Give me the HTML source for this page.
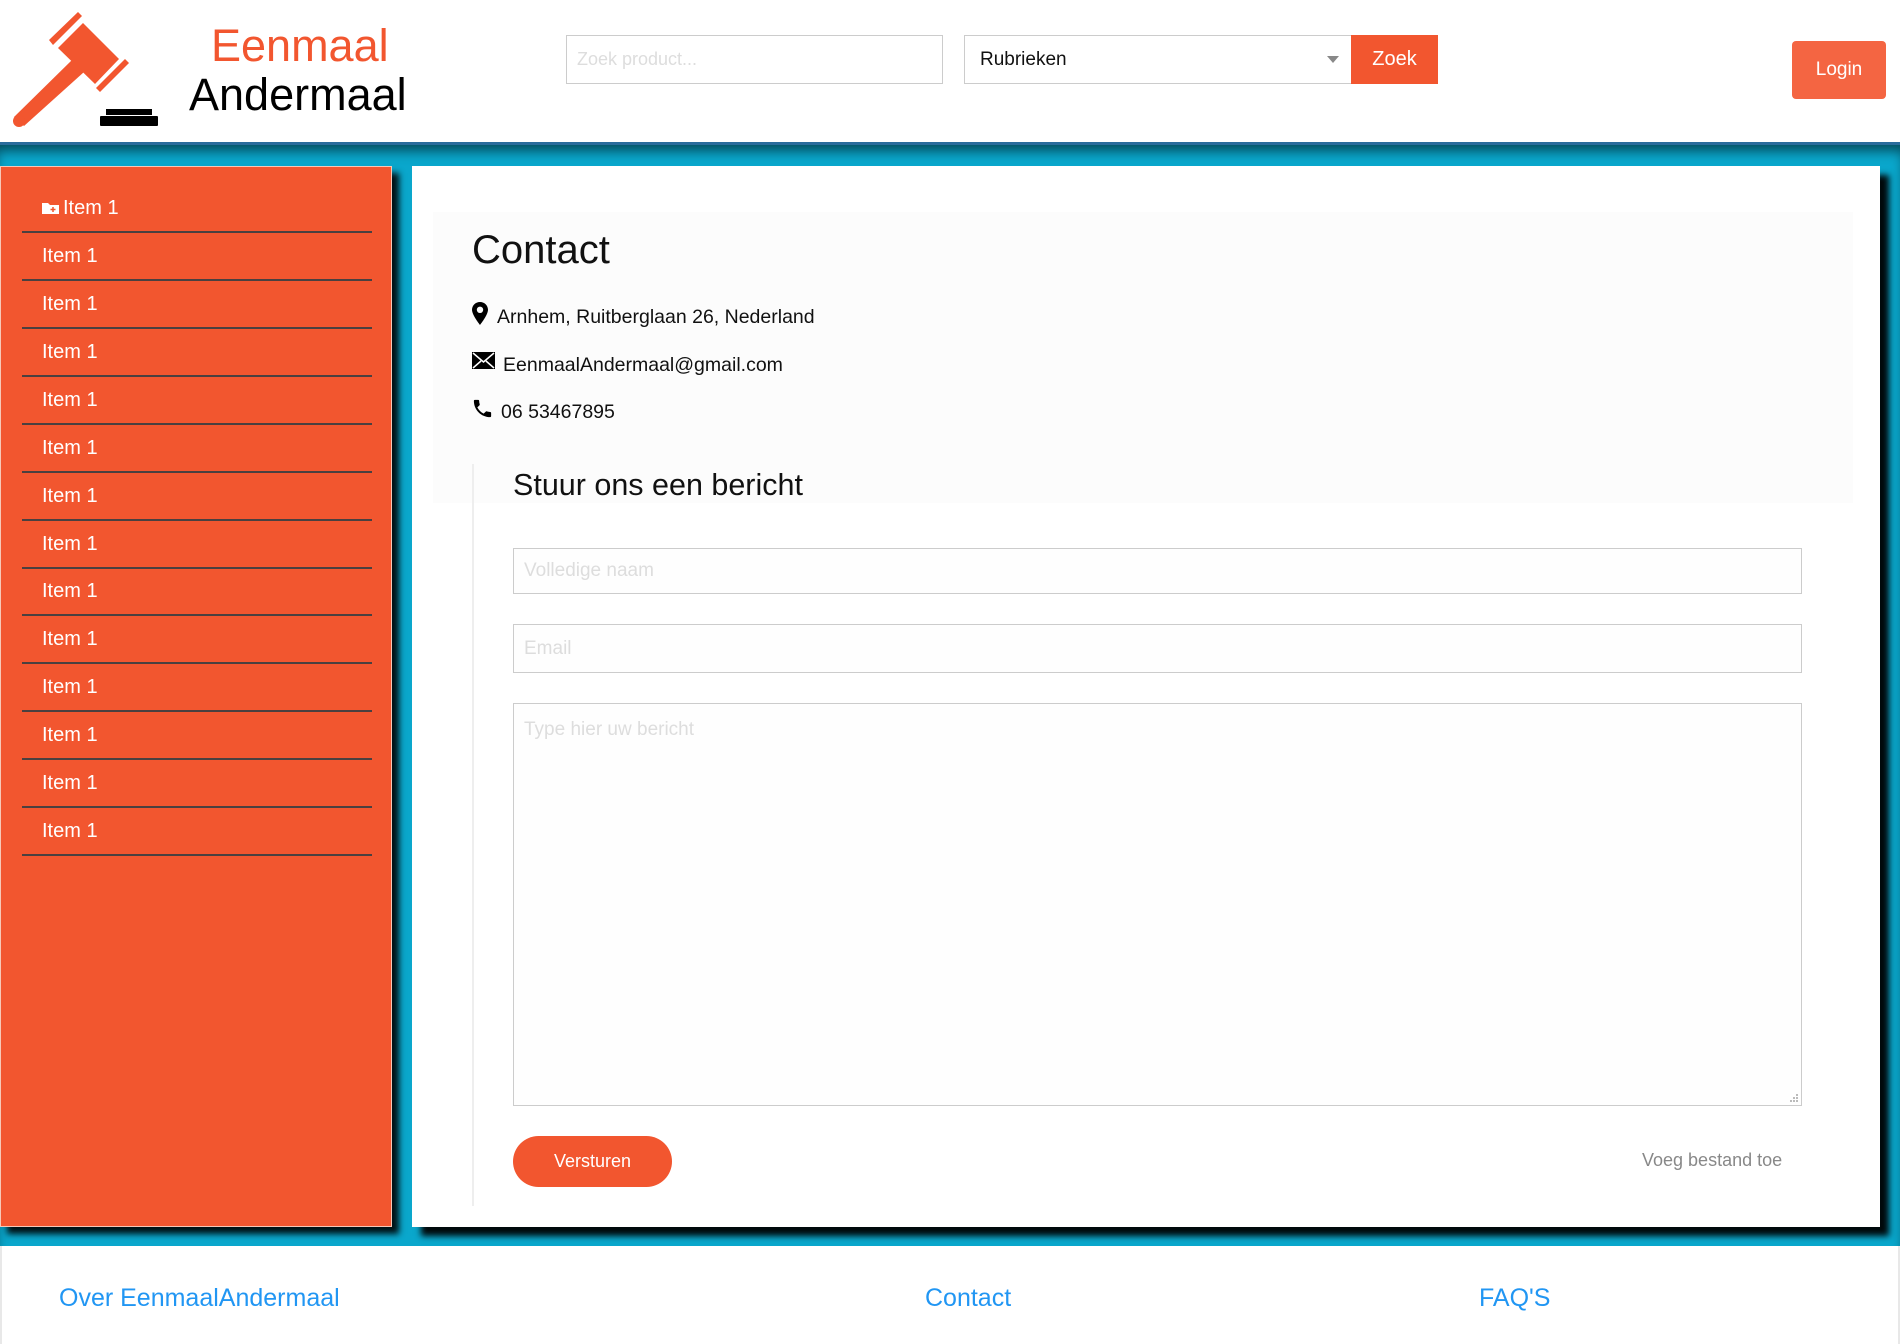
<!DOCTYPE html>
<html><head><meta charset="utf-8"><style>
*{box-sizing:border-box;margin:0;padding:0}
body{width:1900px;height:1344px;position:relative;overflow:hidden;background:#fff;font-family:"Liberation Sans",Arial,sans-serif}
.abs{position:absolute}
#hdr{left:0;top:0;width:1900px;height:142px;background:#fff}
#band{left:0;top:142px;width:1900px;height:1104px;background:#0aa7cc;border-top:3px solid #2a6c9c;box-shadow:inset 0 10px 12px -4px rgba(0,0,0,.55)}
.inp{border:1px solid #ccc;background:#fff}
#side{left:0;top:166px;width:392px;height:1061px;background:#f2562f;border:1px solid #f7c8b8;box-shadow:7px 7px 6px rgba(0,0,0,.9)}
.it{position:absolute;left:21px;width:350px;height:48px;border-bottom:2px solid #4a4040;color:#fff;font-size:20px}
.it span{position:absolute;left:20px;top:12px}
#card{left:412px;top:166px;width:1468px;height:1061px;background:#fff;box-shadow:9px 9px 6px rgba(0,0,0,.95)}
.txt{color:#111;font-size:19.5px}
.ph{color:#ddd;font-size:19px;position:absolute;left:10px}
#foot{left:0;top:1246px;width:1900px;height:98px;background:#fff;border-left:2px solid #e8e8e8;border-right:2px solid #e8e8e8}
.fl{position:absolute;top:1284px;color:#2196f3;font-size:25px}
</style></head><body>
<div id="hdr" class="abs">
<svg class="abs" style="left:0;top:0" width="170" height="135" viewBox="0 0 170 135">
<g fill="#f2562f">
<polygon points="49,40 78,12 82,16 53,45"/>
<polygon points="58,48 83,23 119,59 95,84"/>
<polygon points="96,88 125,59 129,63 100,92"/>
<polygon points="72,60 84,72 24,126 14,117"/>
<circle cx="19" cy="121" r="6"/>
</g>
<rect x="106" y="109" width="46" height="6" fill="#000"/>
<rect x="100" y="116" width="58" height="10" rx="1" fill="#000"/>
</svg>
<div class="abs" style="left:211px;top:20px;font-size:45px;color:#f2562f">Eenmaal</div>
<div class="abs" style="left:189px;top:69px;font-size:45px;color:#000">Andermaal</div>
<div class="abs inp" style="left:566px;top:35px;width:377px;height:49px"><span class="ph" style="top:13px;font-size:18px">Zoek product...</span></div>
<div class="abs inp" style="left:964px;top:35px;width:388px;height:49px"><span style="position:absolute;left:15px;top:13px;font-size:19px;color:#111">Rubrieken</span><span style="position:absolute;right:12px;top:20px;width:0;height:0;border-left:6px solid transparent;border-right:6px solid transparent;border-top:7px solid #888"></span></div>
<div class="abs" style="left:1351px;top:35px;width:87px;height:49px;background:#f2562f;color:#fff;font-size:20px;text-align:center;line-height:49px">Zoek</div>
<div class="abs" style="left:1792px;top:41px;width:94px;height:58px;background:#f46542;border-radius:4px;color:#fff;font-size:19px;text-align:center;line-height:58px">Login</div>
</div>
<div id="band" class="abs"></div>
<div id="side" class="abs">
<div class="it" style="top:18px"><span><svg width="17" height="13" viewBox="0 0 17 13" style="margin-right:4px;vertical-align:0px"><path d="M0 2h6l2 2h9v9H0z" fill="#fff"/><path d="M11 6v5M8.5 8.5h5" stroke="#f2562f" stroke-width="1.5"/></svg>Item 1</span></div>
<div class="it" style="top:66px"><span>Item 1</span></div>
<div class="it" style="top:114px"><span>Item 1</span></div>
<div class="it" style="top:162px"><span>Item 1</span></div>
<div class="it" style="top:210px"><span>Item 1</span></div>
<div class="it" style="top:258px"><span>Item 1</span></div>
<div class="it" style="top:306px"><span>Item 1</span></div>
<div class="it" style="top:354px"><span>Item 1</span></div>
<div class="it" style="top:401px"><span>Item 1</span></div>
<div class="it" style="top:449px"><span>Item 1</span></div>
<div class="it" style="top:497px"><span>Item 1</span></div>
<div class="it" style="top:545px"><span>Item 1</span></div>
<div class="it" style="top:593px"><span>Item 1</span></div>
<div class="it" style="top:641px"><span>Item 1</span></div>
</div>
<div id="card" class="abs">
<div class="abs" style="left:21px;top:46px;width:1420px;height:291px;background:#fcfcfc"></div>
<div class="abs" style="left:60px;top:62px;font-size:40px;color:#111">Contact</div>
<svg class="abs" style="left:60px;top:136px" width="16" height="23" viewBox="0 0 16 23"><path d="M8 0C3.6 0 0 3.4 0 7.8 0 13 8 23 8 23s8-10 8-15.2C16 3.4 12.4 0 8 0zm0 11a3.2 3.2 0 1 1 0-6.4A3.2 3.2 0 0 1 8 11z" fill="#000"/></svg>
<div class="abs txt" style="left:85px;top:140px">Arnhem, Ruitberglaan 26, Nederland</div>
<svg class="abs" style="left:60px;top:186px" width="23" height="17" viewBox="0 0 23 17"><rect width="23" height="17" fill="#000"/><path d="M1 1l10.5 9L22 1M1 16l8-7M22 16l-8-7" stroke="#fff" stroke-width="1.5" fill="none"/></svg>
<div class="abs txt" style="left:91px;top:188px">EenmaalAndermaal@gmail.com</div>
<svg class="abs" style="left:59px;top:231px" width="23" height="23" viewBox="0 0 24 24"><path d="M6.6 10.8c1.4 2.8 3.8 5.1 6.6 6.6l2.2-2.2c.3-.3.7-.4 1-.2 1.1.4 2.3.6 3.6.6.6 0 1 .4 1 1V20c0 .6-.4 1-1 1C10.6 21 3 13.4 3 4c0-.6.4-1 1-1h3.5c.6 0 1 .4 1 1 0 1.3.2 2.5.6 3.6.1.3 0 .7-.2 1z" fill="#000"/></svg>
<div class="abs txt" style="left:89px;top:235px">06 53467895</div>
<div class="abs" style="left:60px;top:298px;width:2px;height:742px;background:#eee"></div>
<div class="abs" style="left:101px;top:302px;font-size:30.5px;color:#111">Stuur ons een bericht</div>
<div class="abs inp" style="left:101px;top:382px;width:1289px;height:46px;background:#fefefe"><span class="ph" style="top:11px">Volledige naam</span></div>
<div class="abs inp" style="left:101px;top:458px;width:1289px;height:49px;background:#fefefe"><span class="ph" style="top:13px">Email</span></div>
<div class="abs inp" style="left:101px;top:537px;width:1289px;height:403px;background:#fefefe"><span class="ph" style="top:15px">Type hier uw bericht</span>
<svg style="position:absolute;right:2px;bottom:2px" width="10" height="10"><g fill="#bbb"><rect x="7" y="1" width="2" height="2"/><rect x="4" y="4" width="2" height="2"/><rect x="7" y="4" width="2" height="2"/><rect x="1" y="7" width="2" height="2"/><rect x="4" y="7" width="2" height="2"/><rect x="7" y="7" width="2" height="2"/></g></svg></div>
<div class="abs" style="left:101px;top:970px;width:159px;height:51px;border-radius:26px;background:#f2562f;color:#fff;font-size:18px;text-align:center;line-height:51px">Versturen</div>
<div class="abs" style="left:1230px;top:984px;font-size:18px;color:#888">Voeg bestand toe</div>
</div>
<div id="foot" class="abs"></div>
<div class="fl" style="left:59px">Over EenmaalAndermaal</div>
<div class="fl" style="left:925px">Contact</div>
<div class="fl" style="left:1479px">FAQ'S</div>
</body></html>
